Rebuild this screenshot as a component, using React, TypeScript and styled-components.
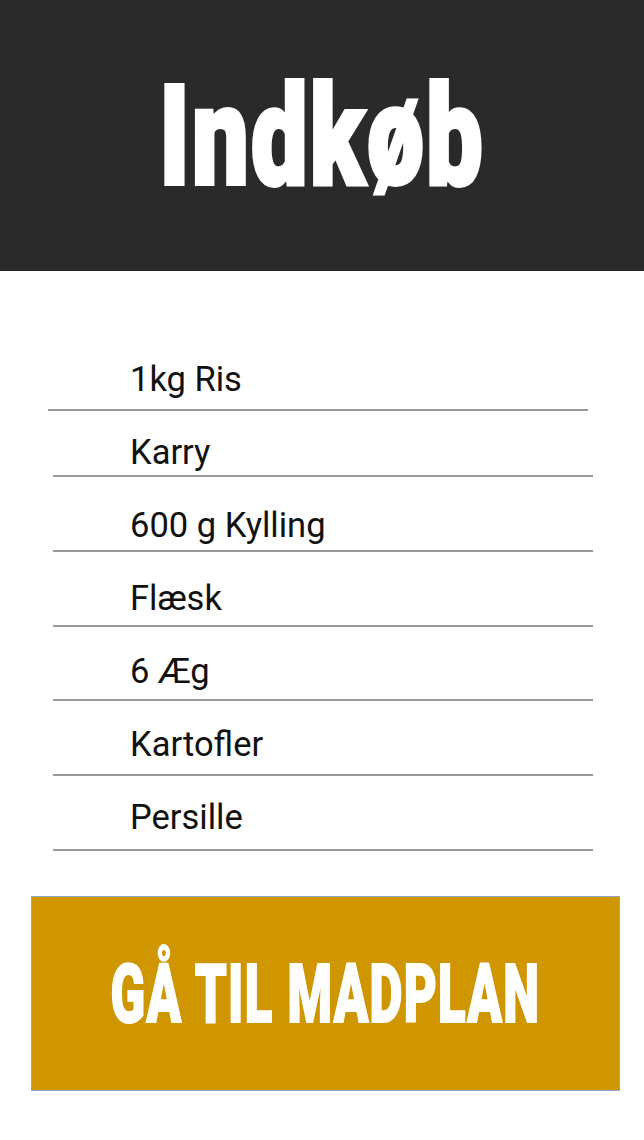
import React from "react";
import styled, { createGlobalStyle } from "styled-components";

const Global = createGlobalStyle`
  html, body { margin: 0; padding: 0; background: #ffffff; }
  body { font-family: Roboto, "Noto Sans", sans-serif; }
`;

const Page = styled.div`
  width: 644px;
  min-height: 1140px;
  background: #ffffff;
  display: flex;
  flex-direction: column;
`;

const Header = styled.header`
  height: 271px;
  background: #2a2a2a;
  display: flex;
  align-items: center;
  justify-content: center;
`;

const Title = styled.h1`
  margin: 0;
  font-family: Roboto, "Liberation Sans", Arial, sans-serif;
  font-weight: 900;
  font-size: 140px;
  line-height: 1;
  color: #ffffff;
  -webkit-text-stroke: 4px #ffffff;
  letter-spacing: 3px;
  transform: scaleX(0.72);
  white-space: nowrap;
`;

const List = styled.ul`
  list-style: none;
  margin: 0;
  padding: 0;
  padding-top: 88px;
  display: flex;
  flex-direction: column;
`;

const Item = styled.li`
  height: 73px;
  display: flex;
  flex-direction: column;
`;

const Label = styled.span`
  padding-left: 130px;
  font-family: Roboto, "Noto Sans", sans-serif;
  font-size: 34.5px;
  line-height: 40px;
  height: 40px;
  color: #111111;
`;

const Divider = styled.div<{ $top: number; $shift: number }>`
  margin-top: ${(p) => p.$top}px;
  margin-left: ${(p) => 53 + p.$shift}px;
  width: 540px;
  height: 2px;
  background: #9a9a9a;
`;

const ButtonWrap = styled.div`
  padding: 26px 25px 0 31px;
`;

const Button = styled.button`
  width: 589px;
  height: 195px;
  box-sizing: border-box;
  border: 1px solid #8ea7c6;
  background: #d09600;
  display: flex;
  align-items: center;
  justify-content: center;
  padding: 0;
  cursor: pointer;
`;

const ButtonText = styled.span`
  font-family: Roboto, "Liberation Sans", Arial, sans-serif;
  font-weight: 900;
  font-size: 82px;
  line-height: 1;
  color: #ffffff;
  -webkit-text-stroke: 2px #ffffff;
  letter-spacing: 2px;
  display: inline-block;
  transform: scaleX(0.62);
  white-space: nowrap;
`;

const items = [
  { text: "1kg Ris", gap: 20, shift: -5 },
  { text: "Karry", gap: 13, shift: 0 },
  { text: "600 g Kylling", gap: 15, shift: 0 },
  { text: "Flæsk", gap: 17, shift: 0 },
  { text: "6 Æg", gap: 18, shift: 0 },
  { text: "Kartofler", gap: 20, shift: 0 },
  { text: "Persille", gap: 22, shift: 0 },
];

export default function App() {
  return (
    <Page>
      <Global />
      <Header>
        <Title>Indkøb</Title>
      </Header>
      <List>
        {items.map((it) => (
          <Item key={it.text}>
            <Label>{it.text}</Label>
            <Divider $top={it.gap - 10} $shift={it.shift} />
          </Item>
        ))}
      </List>
      <ButtonWrap>
        <Button>
          <ButtonText>GÅ TIL MADPLAN</ButtonText>
        </Button>
      </ButtonWrap>
    </Page>
  );
}
